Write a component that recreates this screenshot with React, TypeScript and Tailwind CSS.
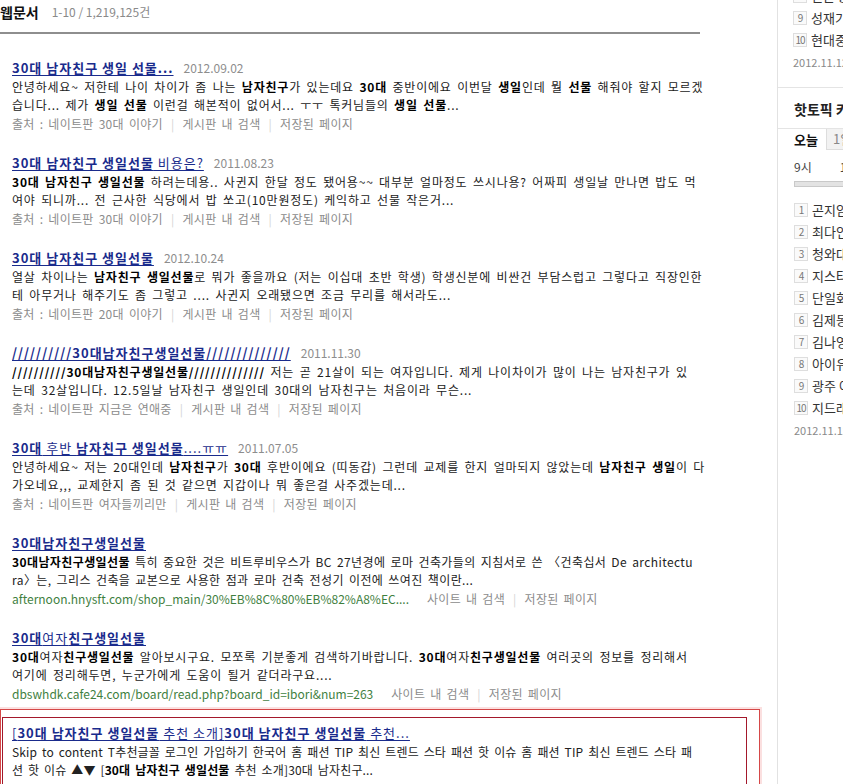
import React from 'react';

type Result = {
	title: string;
	date?: string;
	lines: string[];
	source?: string;
	url?: string;
	track?: string;
};

const results: Result[] = [
	{
		title: '**30대 남자친구 생일 선물...**',
		date: '2012.09.02',
		lines: [
			'안녕하세요~ 저한테 나이 차이가 좀 나는 **남자친구**가 있는데요 **30대** 중반이에요 이번달 **생일**인데 뭘 **선물** 해줘야 할지 모르겠',
			'습니다... 제가 **생일 선물** 이런걸 해본적이 없어서... ㅜㅜ 톡커님들의 **생일 선물**...',
		],
		source: '출처 : 네이트판 30대 이야기',
	},
	{
		title: '**30대 남자친구 생일선물** 비용은?',
		date: '2011.08.23',
		lines: [
			'**30대 남자친구 생일선물** 하려는데용.. 사귄지 한달 정도 됐어용~~ 대부분 얼마정도 쓰시나용? 어짜피 생일날 만나면 밥도 먹',
			'여야 되니까... 전 근사한 식당에서 밥 쏘고(10만원정도) 케익하고 선물 작은거...',
		],
		source: '출처 : 네이트판 30대 이야기',
	},
	{
		title: '**30대 남자친구 생일선물**',
		date: '2012.10.24',
		lines: [
			'열살 차이나는 **남자친구 생일선물**로 뭐가 좋을까요 (저는 이십대 초반 학생) 학생신분에 비싼건 부담스럽고 그렇다고 직장인한',
			'테 아무거나 해주기도 좀 그렇고 .... 사귄지 오래됐으면 조금 무리를 해서라도...',
		],
		source: '출처 : 네이트판 20대 이야기',
	},
	{
		title: '**//////////30대남자친구생일선물//////////////**',
		date: '2011.11.30',
		lines: [
			'**//////////30대남자친구생일선물//////////////** 저는 곧 21살이 되는 여자입니다. 제게 나이차이가 많이 나는 남자친구가 있',
			'는데 32살입니다. 12.5일날 남자친구 생일인데 30대의 남자친구는 처음이라 무슨...',
		],
		source: '출처 : 네이트판 지금은 연애중',
	},
	{
		title: '**30대** 후반 **남자친구 생일선물**....ㅠㅠ',
		date: '2011.07.05',
		lines: [
			'안녕하세요~ 저는 20대인데 **남자친구**가 **30대** 후반이에요 (띠동갑) 그런데 교제를 한지 얼마되지 않았는데 **남자친구 생일**이 다',
			'가오네요,,, 교제한지 좀 된 것 같으면 지갑이나 뭐 좋은걸 사주겠는데...',
		],
		source: '출처 : 네이트판 여자들끼리만',
	},
	{
		title: '**30대남자친구생일선물**',
		lines: [
			'**30대남자친구생일선물** 특히 중요한 것은 비트루비우스가 BC 27년경에 로마 건축가들의 지침서로 쓴 〈건축십서 De architectu',
			'ra〉는, 그리스 건축을 교본으로 사용한 점과 로마 건축 전성기 이전에 쓰여진 책이란...',
		],
		url: 'afternoon.hnysft.com/shop_main/30%EB%8C%80%EB%82%A8%EC....',
		track: 'tracking-[0.4px]',
	},
	{
		title: '**30대**여자**친구생일선물**',
		lines: [
			'**30대**여자**친구생일선물** 알아보시구요. 모쪼록 기분좋게 검색하기바랍니다. **30대**여자**친구생일선물** 여러곳의 정보를 정리해서',
			'여기에 정리해두면, 누군가에게 도움이 될거 같더라구요....',
		],
		url: 'dbswhdk.cafe24.com/board/read.php?board_id=ibori&num=263',
	},
];

const featured: Result = {
	title: '[**30대 남자친구 생일선물** 추천 소개]**30대 남자친구 생일선물** 추천...',
	lines: [
		'Skip to content T추천글꼴 로그인 가입하기 한국어 홈 패션 TIP 최신 트렌드 스타 패션 핫 이슈 홈 패션 TIP 최신 트렌드 스타 패',
		'션 핫 이슈 ▲▼ [**30대 남자친구 생일선물** 추천 소개]30대 남자친구...',
	],
	track: 'tracking-[0.15px]',
};

function Rich({ text, boldClass = '' }: { text: string; boldClass?: string }) {
	return (
		<>
			{text.split('**').map((part, i) =>
				i % 2 ? (
					<b key={i} className={`font-bold ${boldClass}`}>
						{part}
					</b>
				) : (
					<span key={i}>{part}</span>
				)
			)}
		</>
	);
}

function Sep() {
	return <span className="px-[8px] text-[#d4d4d4]">|</span>;
}

function ResultItem({ item }: { item: Result }) {
	return (
		<div>
			<div className="h-[20px] flex items-center whitespace-nowrap">
				<a className="text-[13px] tracking-[1px] text-[#1a2b8c] underline underline-offset-[2px] cursor-pointer">
					<Rich text={item.title} />
				</a>
				{item.date && (
					<span className="ml-[10px] text-[12px] text-[#8d8d8d]">{item.date}</span>
				)}
			</div>
			<div
				className={`text-[12px] leading-[18px] text-[#222] ${item.track ?? 'tracking-[0.8px]'} [word-spacing:2px] whitespace-nowrap`}
			>
				{item.lines.map((line, i) => (
					<div key={i}>
						<Rich text={line} boldClass="text-black" />
					</div>
				))}
			</div>
			{(item.source || item.url) && (
				<div className="h-[20px] flex items-center text-[12px] text-[#8c8c8c] whitespace-nowrap tracking-[0.3px] [word-spacing:2px]">
					{item.source ? (
						<>
							<span>{item.source}</span>
							<Sep />
							<span>게시판 내 검색</span>
						</>
					) : (
						<>
							<span className="text-[#3f7f3f] tracking-normal [word-spacing:0px]">{item.url}</span>
							<span className="ml-[18px]">사이트 내 검색</span>
						</>
					)}
					<Sep />
					<span>저장된 페이지</span>
				</div>
			)}
		</div>
	);
}

function RankRow({ n, text }: { n: number; text: string }) {
	return (
		<div className="h-[22px] flex items-center whitespace-nowrap">
			<span className="w-[14px] h-[14px] flex items-center justify-center border border-[#dedede] bg-[#fafafa] text-[10px] text-[#777] tracking-[-1px] leading-none">
				{n}
			</span>
			<span className="ml-[4px] text-[13px] text-[#333]">{text}</span>
		</div>
	);
}

const hotTopics = [
	'곤지암 리조트',
	'최다인 아나운서',
	'청와대 대변인',
	'지스타 2012',
	'단일화 협상',
	'김제동 트위터',
	'김나영 패션',
	'아이유 사진',
	'광주 이마트',
	'지드래곤 콘서트',
];

export default function App() {
	return (
		<div className="w-[843px] h-[784px] overflow-hidden bg-white flex font-['Noto_Sans_CJK_KR',sans-serif] text-[#222]">
			<div className="w-[777px] shrink-0">
				<div className="w-[700px]">
					<div className="h-[24px] flex items-center whitespace-nowrap">
						<h2 className="text-[14px] font-bold text-[#111]">웹문서</h2>
						<span className="ml-[13px] text-[12px] text-[#8a8a8a]">1-10 / 1,219,125건</span>
					</div>
					<div className="mt-[8px] h-[2px] bg-[#8e8e8e]" />
				</div>

				<div className="pt-[24px]">
					{results.map((item, i) => (
						<div key={i} className="pl-[12px] mb-[19px]">
							<ResultItem item={item} />
						</div>
					))}

					<div className="-mt-[14px] w-[760px] border border-[#d54848] shadow-[0_0_0_2px_#fbe0e0] pt-[7px] pl-[1px] pr-[12px]">
						<div className="border border-[#a3182b] h-[200px] pt-[5px] pl-[9px]">
							<ResultItem item={featured} />
						</div>
					</div>
				</div>
			</div>

			<div className="w-[260px] shrink-0 border-l border-[#e2e2e2]">
				<div className="pl-[15px] -mt-[15px] pb-[14px]">
					<RankRow n={8} text="일본 총리" />
					<RankRow n={9} text="성재기 대표" />
					<RankRow n={10} text="현대중공업" />
					<div className="h-[22px] flex items-center text-[11px] text-[#8a8a8a]">2012.11.12</div>
				</div>
				<div className="border-t border-[#e4e4e4] h-[41px] flex items-center pl-[16px] pt-[3px]">
					<h3 className="text-[14px] font-bold text-[#222] whitespace-nowrap">핫토픽 키워드</h3>
				</div>
				<div className="border-t border-[#e4e4e4] flex h-[22px] text-[13px]">
					<div className="pl-[16px] pr-[8px] flex items-center font-bold text-[#111]">오늘</div>
					<div className="px-[6px] flex items-center bg-[#f2f2f2] border-l border-b border-[#dddddd] text-[#888]">1일</div>
					<div className="flex-1 border-b border-[#dddddd]" />
				</div>
				<div className="pl-[16px]">
					<div className="h-[26px] flex items-end text-[12px] text-[#444] whitespace-nowrap">
						<span>9시</span>
						<span className="ml-[28px]">10시</span>
					</div>
					<div className="mt-[5px] h-[6px] border border-[#c9c9c9] bg-[#e3e3e3]" />
					<div className="mt-[12px]">
						{hotTopics.map((t, i) => (
							<RankRow key={i} n={i + 1} text={t} />
						))}
						<div className="h-[22px] flex items-center text-[11px] text-[#8a8a8a]">2012.11.12</div>
					</div>
				</div>
			</div>
		</div>
	);
}
